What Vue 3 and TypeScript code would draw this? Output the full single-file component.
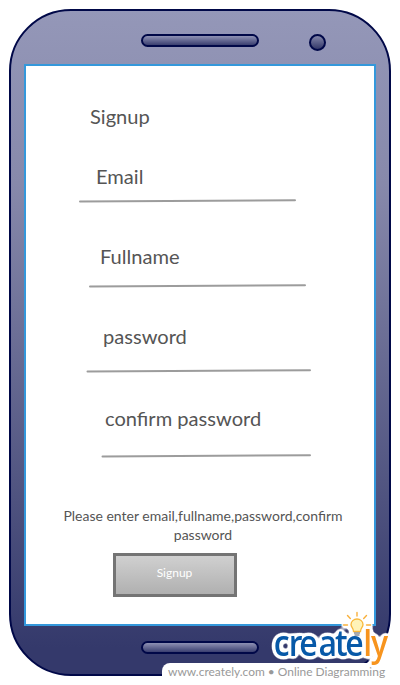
<script setup lang="ts">
interface Field {
  id: string
  label: string
  x1: number
  x2: number
}

const fields: Field[] = [
  { id: 'email', label: 'Email', x1: 54, x2: 269 },
  { id: 'fullname', label: 'Fullname', x1: 64, x2: 279 },
  { id: 'password', label: 'password', x1: 61.5, x2: 284 },
  { id: 'confirm', label: 'confirm password', x1: 76.5, x2: 284 },
]
</script>

<template>
  <main class="canvas">
    <section class="phone">
      <header class="top">
        <span class="slot"></span>
        <span class="camera"></span>
      </header>
      <form class="screen" @submit.prevent>
        <h1 class="title">Signup</h1>
        <div v-for="f in fields" :key="f.id" class="field" :class="f.id">
          <label class="label">{{ f.label }}</label>
          <svg class="rule" width="348" height="6" viewBox="0 0 348 6">
            <line :x1="f.x1" y1="3.4" :x2="f.x2" y2="2.3" />
          </svg>
        </div>
        <p class="hint">Please enter email,fullname,password,confirm password</p>
        <button class="submit" type="submit">Signup</button>
      </form>
      <footer class="bottom"><span class="slot"></span></footer>
    </section>

    <div class="tagline">www.creately.com • Online Diagramming</div>
    <svg class="logo" width="135" height="75" viewBox="265 605 135 75">
      <defs>
        <filter id="halo" x="265" y="605" width="135" height="75" filterUnits="userSpaceOnUse" color-interpolation-filters="sRGB">
          <feGaussianBlur in="SourceAlpha" stdDeviation="2.6" result="soft" />
          <feComponentTransfer in="soft" result="edge">
            <feFuncR type="linear" slope="0" intercept="1" />
            <feFuncG type="linear" slope="0" intercept="1" />
            <feFuncB type="linear" slope="0" intercept="1" />
            <feFuncA type="linear" slope="16" intercept="-0.6" />
          </feComponentTransfer>
          <feMerge>
            <feMergeNode in="edge" />
            <feMergeNode in="SourceGraphic" />
          </feMerge>
        </filter>
      </defs>
      <g filter="url(#halo)">
        <text transform="scale(0.9 1)" y="656.5" x="304.2 320.9 332.6 354 372.2 383.7"><tspan class="blue">create</tspan><tspan class="orange" x="403.6 412.1">ly</tspan></text>
        <path class="bulb" d="M353.5 631.5C353.5 628 351 627.5 351 624.5A6 5.5 0 0 1 363 624.5C363 627.5 360.5 628 360.5 631.5Z" />
        <path class="base" d="M354 633H360M354.5 635H359.5" />
        <path class="rays" d="M357 612.5V616M347.5 615.5L350.3 618.5M366.5 615.5L363.7 618.5M343.5 625H347.5M366.5 625H370.5" />
      </g>
    </svg>
  </main>
</template>

<style>
body {
  background: #fff;
}
</style>

<style scoped>
.canvas {
  position: relative;
  box-sizing: border-box;
  width: 400px;
  height: 685px;
  padding: 9px;
  overflow: hidden;
  background: #fff;
  font-family: Lato, "Liberation Sans", sans-serif;
  color: #555;
}
.phone {
  box-sizing: border-box;
  display: flex;
  flex-direction: column;
  align-items: center;
  width: 382px;
  height: 667px;
  border: 2px solid #000848;
  border-radius: 62px;
  background: linear-gradient(#9497b8 0%, #8789ab 26%, #34396b 96%);
}
.top {
  display: flex;
  box-sizing: border-box;
  width: 100%;
  height: 53px;
  padding: 23px 0 0 130px;
}
.slot {
  box-sizing: border-box;
  width: 118px;
  height: 13px;
  border: 2px solid #000848;
  border-radius: 7px;
  background: linear-gradient(#8e91b4, #3a3f70);
}
.camera {
  box-sizing: border-box;
  width: 17px;
  height: 17px;
  margin-left: 50px;
  border: 2px solid #000848;
  border-radius: 50%;
  background: linear-gradient(#8386a9, #333869);
}
.screen {
  box-sizing: border-box;
  display: flex;
  flex-direction: column;
  width: 352px;
  height: 562px;
  border: 2px solid #3498db;
  background: #fff;
}
.title,
.label {
  display: block;
  margin: 0;
  font-size: 20.1px;
  font-weight: 400;
  line-height: 24px;
}
.title {
  margin: 38px 0 0 64px;
}
.rule {
  display: block;
}
.rule line {
  stroke: #9c9c9c;
  stroke-width: 2;
  stroke-linecap: round;
}
.email { margin-top: 36px; }
.email .label { margin: 0 0 10px 70px; }
.fullname { margin-top: 40px; }
.fullname .label { margin: 0 0 15px 74px; }
.password { margin-top: 35px; }
.password .label { margin: 0 0 20px 77px; }
.confirm { margin-top: 32px; }
.confirm .label { margin: 0 0 23px 79px; }
.hint {
  width: 290px;
  margin: 47px 0 0 32px;
  font-size: 14px;
  line-height: 19px;
  text-align: center;
}
.submit {
  box-sizing: border-box;
  width: 124px;
  height: 44px;
  margin: 9px 0 0 87px;
  padding: 0 1px 5px 0;
  border: 3px solid #747474;
  border-radius: 0;
  background: linear-gradient(#d0d0d0, #b0b0b0);
  color: #fff;
  font-family: inherit;
  font-size: 12px;
}
.bottom {
  display: flex;
  box-sizing: border-box;
  width: 100%;
  padding: 15px 0 0 130px;
}
.tagline {
  position: absolute;
  left: 162px;
  top: 663px;
  box-sizing: border-box;
  width: 230px;
  height: 22px;
  padding-left: 6px;
  border-radius: 8px 0 0 8px;
  background: #fff;
  color: #999;
  font-size: 11.95px;
  line-height: 18px;
  white-space: nowrap;
}
.logo {
  position: absolute;
  left: 265px;
  top: 605px;
  font-family: "Open Sans", sans-serif;
  font-size: 35.5px;
  font-weight: 600;
}
.blue {
  fill: #0759a8;
}
.orange {
  fill: #f7941e;
}
.bulb {
  fill: #fff3b8;
  stroke: #f9b83a;
  stroke-width: 1.3;
}
.base {
  fill: none;
  stroke: #8c9096;
  stroke-width: 1.3;
}
.rays {
  fill: none;
  stroke: #f9b03a;
  stroke-width: 1.4;
  stroke-linecap: round;
}
</style>
